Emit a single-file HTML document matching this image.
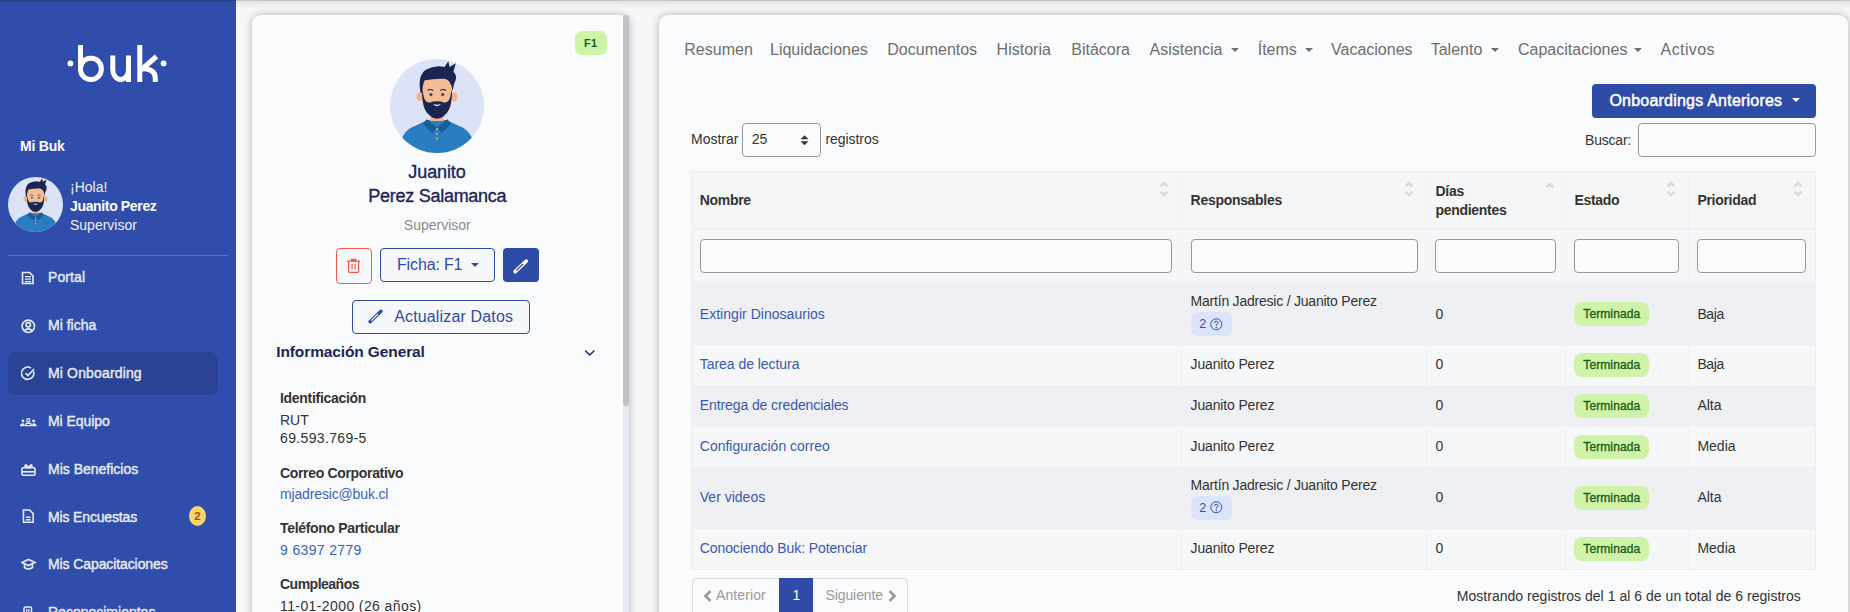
<!DOCTYPE html>
<html><head><meta charset="utf-8"><style>
html,body{margin:0;padding:0;width:1850px;height:612px;overflow:hidden;background:#f6f7f9;font-family:"Liberation Sans",sans-serif}
.a{position:absolute}
.t{position:absolute;white-space:nowrap;line-height:1}
#main{position:absolute;left:236px;top:0;width:1614px;height:612px;overflow:hidden;background:#f4f5f7}
</style></head><body>
<div class="a" style="left:0px;top:0px;width:236px;height:612px;background:#304dab"></div>
<svg width="236" height="120" style="position:absolute;left:0;top:0" fill="none" stroke="#fff" stroke-width="5">
<circle cx="70.4" cy="63.4" r="2.9" fill="#fff" stroke="none"/>
<circle cx="163.6" cy="63.4" r="2.9" fill="#fff" stroke="none"/>
<path d="M80.5 45 V71"/>
<rect x="80.5" y="58.3" width="20.8" height="21.2" rx="10"/>
<path d="M112.8 55.5 V70 A7.85 9.5 0 0 0 128.5 70"/>
<path d="M128.5 55.5 V82"/>
<path d="M139.8 45 V82"/>
<path d="M156.5 56.5 L141 70"/>
<path d="M141 68.5 Q155.3 68.5 155.3 78 V82"/>
</svg>
<div class="t" style="left:20px;top:139.00px;font-size:14px;font-weight:700;color:#fff;letter-spacing:-0.2px;">Mi Buk</div>
<svg viewBox="0 0 100 100" width="55" height="55" style="position:absolute;left:8px;top:177px">
<defs><clipPath id="ca"><circle cx="50" cy="50" r="50"/></clipPath></defs>
<circle cx="50" cy="50" r="50" fill="#dce3f7"/>
<g clip-path="url(#ca)">
<path d="M9 100 Q11 76 27 71 L40 65 L60 65 L73 71 Q89 76 91 100 Z" fill="#2a7dc0"/>
<rect x="43" y="52" width="14" height="14" fill="#f2b48c"/>
<path d="M39 64 L50 73 L45 79 L35 69 Z" fill="#1a5f96"/>
<path d="M61 64 L50 73 L55 79 L65 69 Z" fill="#1a5f96"/>
<circle cx="50" cy="74.5" r="1.1" fill="#e8b84a"/><circle cx="50" cy="79.5" r="1.1" fill="#e8b84a"/><circle cx="50" cy="84.5" r="1.1" fill="#e8b84a"/>
<ellipse cx="32" cy="40" rx="3.8" ry="5" fill="#f2b48c"/>
<ellipse cx="68" cy="40" rx="3.8" ry="5" fill="#f2b48c"/>
<path d="M34.5 24 Q34.5 14 50 14 Q65.5 14 65.5 24 L65.5 46 Q65.5 57 50 57 Q34.5 57 34.5 46 Z" fill="#f5bc93"/>
<path d="M34 32 Q34 52 40 58 Q45 63.5 50 63.5 Q55 63.5 60 58 Q66 52 66 32 L64.5 38 Q63.5 46 58 46.5 Q50 43.5 42 46.5 Q36.5 46 35.5 38 Z" fill="#1a2552"/>
<path d="M45.5 48 Q50 52.5 54.5 48 Q50 49.2 45.5 48 Z" fill="#fff"/>
<path d="M32.5 36 Q29 18 38 11.5 Q48 6 58 8.5 L62 2.5 L63.5 8.5 L70 4.5 L67.5 13.5 Q73 18 68 27 L66.5 34 Q65 22 58 21 Q48 20.5 37 22.5 Q34.5 27 34.5 36 Z" fill="#1a2552"/>
<circle cx="43.5" cy="37.8" r="1.7" fill="#1a5a70"/><circle cx="56" cy="37.8" r="1.7" fill="#1a5a70"/>
<path d="M40 33.5 Q43 31.5 46 33.5" stroke="#1a2552" stroke-width="1.1" fill="none"/>
<path d="M53.5 33.5 Q56.5 31.5 59.5 33.5" stroke="#1a2552" stroke-width="1.1" fill="none"/>
</g></svg>
<div class="t" style="left:70px;top:180.00px;font-size:14px;font-weight:400;color:#eef0f8;">¡Hola!</div>
<div class="t" style="left:70px;top:199.00px;font-size:14px;font-weight:700;color:#fff;letter-spacing:-0.35px;">Juanito Perez</div>
<div class="t" style="left:70px;top:218.00px;font-size:14px;font-weight:400;color:#eef0f8;">Supervisor</div>
<div class="a" style="left:8px;top:255px;width:220px;height:1px;background:rgba(255,255,255,0.22)"></div>
<div class="a" style="left:8px;top:352px;width:210px;height:43px;background:#2a4396;border-radius:8px"></div>
<div class="t" style="left:48px;top:270.00px;font-size:14px;font-weight:400;color:#e8ebf4;letter-spacing:0.1px;-webkit-text-stroke:0.4px #e8ebf4;">Portal</div>
<svg width="14" height="14" style="position:absolute;left:21px;top:270.8px" fill="none" stroke="#e8ebf4" stroke-width="1.6"><path d="M1.5 1.5 H8.5 L12 5 V12.5 H1.5 Z"/><path d="M4 5.6 H10 M4 8.1 H10 M4 10.6 H10" stroke-width="1.3"/></svg>
<div class="t" style="left:48px;top:318.00px;font-size:14px;font-weight:400;color:#e8ebf4;-webkit-text-stroke:0.4px #e8ebf4;">Mi ficha</div>
<svg width="15" height="15" style="position:absolute;left:21px;top:319.4px" fill="none" stroke="#e8ebf4" stroke-width="1.6"><circle cx="7.3" cy="7.3" r="6.2"/><circle cx="7.3" cy="5.8" r="2.2"/><path d="M3.3 11.8 Q7.3 7.8 11.3 11.8"/></svg>
<div class="t" style="left:48px;top:366.00px;font-size:14px;font-weight:400;color:#e8ebf4;letter-spacing:0.15px;-webkit-text-stroke:0.4px #e8ebf4;">Mi Onboarding</div>
<svg width="15" height="15" style="position:absolute;left:21px;top:366px" fill="none" stroke="#e8ebf4" stroke-width="1.6"><path d="M12.5 5.2 A6.2 6.2 0 1 1 10 2"/><path d="M4.5 7 L7 9.5 L13 3"/></svg>
<div class="t" style="left:48px;top:414.00px;font-size:14px;font-weight:400;color:#e8ebf4;letter-spacing:-0.05px;-webkit-text-stroke:0.4px #e8ebf4;">Mi Equipo</div>
<svg width="17" height="10" style="position:absolute;left:19.5px;top:418px" fill="#e8ebf4"><circle cx="8.3" cy="2.2" r="1.6" fill="none" stroke="#e8ebf4" stroke-width="1.2"/><circle cx="3" cy="3" r="1.4"/><circle cx="13.6" cy="3" r="1.4"/><path d="M5.3 7.6 Q5.3 5 8.3 5 Q11.3 5 11.3 7.6 Z" fill="none" stroke="#e8ebf4" stroke-width="1.3"/><path d="M0 8.2 Q0 5.2 3 5.2 Q4.5 5.2 4.5 8.2 Z"/><path d="M12 8.2 Q12 5.2 13.6 5.2 Q16.6 5.2 16.6 8.2 Z"/></svg>
<div class="t" style="left:48px;top:462.00px;font-size:14px;font-weight:400;color:#e8ebf4;-webkit-text-stroke:0.4px #e8ebf4;">Mis Beneficios</div>
<svg width="15" height="13" style="position:absolute;left:20.5px;top:462.8px" fill="none" stroke="#e8ebf4" stroke-width="1.6"><rect x="1" y="4.8" width="13" height="7.4" rx="1.2"/><path d="M1 8.8 H14"/><path d="M7.5 4.8 Q5 0.5 4 2.5 Q3.5 4 7.5 4.8 Q10 0.5 11 2.5 Q11.5 4 7.5 4.8"/></svg>
<div class="t" style="left:48px;top:510.00px;font-size:14px;font-weight:400;color:#e8ebf4;letter-spacing:-0.15px;-webkit-text-stroke:0.4px #e8ebf4;">Mis Encuestas</div>
<svg width="13" height="15" style="position:absolute;left:22px;top:508.5px" fill="none" stroke="#e8ebf4" stroke-width="1.6"><path d="M1.5 1 H7.5 L11.2 4.7 V13.2 H1.5 Z"/><path d="M4 8.3 H8.5 M4 10.8 H8.5"/></svg>
<div class="t" style="left:48px;top:557.00px;font-size:14px;font-weight:400;color:#e8ebf4;letter-spacing:-0.1px;-webkit-text-stroke:0.4px #e8ebf4;">Mis Capacitaciones</div>
<svg width="16" height="13" style="position:absolute;left:20.5px;top:558px" fill="none" stroke="#e8ebf4" stroke-width="1.6"><path d="M1 4.5 L7.5 1.5 L14 4.5 L7.5 7.5 Z"/><path d="M3.5 6 V9.5 Q7.5 12.5 11.5 9.5 V6"/></svg>
<div class="t" style="left:48px;top:605.00px;font-size:14px;font-weight:400;color:#e8ebf4;-webkit-text-stroke:0.4px #e8ebf4;">Reconocimientos</div>
<svg width="11" height="12" style="position:absolute;left:23px;top:605.5px" fill="none" stroke="#e8ebf4" stroke-width="1.5"><rect x="1" y="1" width="7.5" height="10" rx="1.5"/><path d="M3.7 3 V7 M5.8 3 V7" stroke-width="1.2"/></svg>
<div class="a" style="left:189px;top:506px;width:17px;height:20px;background:#f8d46a;border-radius:50%"></div>
<div class="t" style="left:194.3px;top:511.00px;font-size:11.5px;font-weight:700;color:#a0500f;">2</div>
<div class="a" style="left:252px;top:15px;width:377px;height:640px;background:#fafbfd;border-radius:9px;box-shadow:0 0 8px rgba(0,0,0,0.28)"></div>
<div class="a" style="left:623px;top:15px;width:6px;height:597px;background:#e6e9f2;border-radius:0 9px 0 0"></div>
<div class="a" style="left:623px;top:15px;width:6px;height:391px;background:#c2c3c6;border-radius:3px"></div>
<div class="a" style="left:575px;top:31px;width:32px;height:24px;background:#cdf4a9;border-radius:7px"></div>
<div class="t" style="left:584px;top:38.00px;font-size:11px;font-weight:700;color:#1a5e1a;letter-spacing:0.2px;">F1</div>
<svg viewBox="0 0 100 100" width="94" height="94" style="position:absolute;left:390px;top:58.5px">
<defs><clipPath id="cb"><circle cx="50" cy="50" r="50"/></clipPath></defs>
<circle cx="50" cy="50" r="50" fill="#dce3f7"/>
<g clip-path="url(#cb)">
<path d="M9 100 Q11 76 27 71 L40 65 L60 65 L73 71 Q89 76 91 100 Z" fill="#2a7dc0"/>
<rect x="43" y="52" width="14" height="14" fill="#f2b48c"/>
<path d="M39 64 L50 73 L45 79 L35 69 Z" fill="#1a5f96"/>
<path d="M61 64 L50 73 L55 79 L65 69 Z" fill="#1a5f96"/>
<circle cx="50" cy="74.5" r="1.1" fill="#e8b84a"/><circle cx="50" cy="79.5" r="1.1" fill="#e8b84a"/><circle cx="50" cy="84.5" r="1.1" fill="#e8b84a"/>
<ellipse cx="32" cy="40" rx="3.8" ry="5" fill="#f2b48c"/>
<ellipse cx="68" cy="40" rx="3.8" ry="5" fill="#f2b48c"/>
<path d="M34.5 24 Q34.5 14 50 14 Q65.5 14 65.5 24 L65.5 46 Q65.5 57 50 57 Q34.5 57 34.5 46 Z" fill="#f5bc93"/>
<path d="M34 32 Q34 52 40 58 Q45 63.5 50 63.5 Q55 63.5 60 58 Q66 52 66 32 L64.5 38 Q63.5 46 58 46.5 Q50 43.5 42 46.5 Q36.5 46 35.5 38 Z" fill="#1a2552"/>
<path d="M45.5 48 Q50 52.5 54.5 48 Q50 49.2 45.5 48 Z" fill="#fff"/>
<path d="M32.5 36 Q29 18 38 11.5 Q48 6 58 8.5 L62 2.5 L63.5 8.5 L70 4.5 L67.5 13.5 Q73 18 68 27 L66.5 34 Q65 22 58 21 Q48 20.5 37 22.5 Q34.5 27 34.5 36 Z" fill="#1a2552"/>
<circle cx="43.5" cy="37.8" r="1.7" fill="#1a5a70"/><circle cx="56" cy="37.8" r="1.7" fill="#1a5a70"/>
<path d="M40 33.5 Q43 31.5 46 33.5" stroke="#1a2552" stroke-width="1.1" fill="none"/>
<path d="M53.5 33.5 Q56.5 31.5 59.5 33.5" stroke="#1a2552" stroke-width="1.1" fill="none"/>
</g></svg>
<div class="t" style="left:237.0px;width:400px;text-align:center;top:163.00px;font-size:18px;font-weight:400;color:#1b2559;letter-spacing:-0.1px;-webkit-text-stroke:0.35px #1b2559;">Juanito</div>
<div class="t" style="left:237.3px;width:400px;text-align:center;top:187.00px;font-size:18px;font-weight:400;color:#1b2559;letter-spacing:-0.27px;-webkit-text-stroke:0.35px #1b2559;">Perez Salamanca</div>
<div class="t" style="left:237.3px;width:400px;text-align:center;top:218.00px;font-size:14px;font-weight:400;color:#8a8a8a;">Supervisor</div>
<div class="a" style="left:336px;top:248px;width:35.8px;height:35.8px;box-sizing:border-box;border:1px solid #f4584c;border-radius:4px;background:#f7f8fa"></div>
<svg width="16" height="16" style="position:absolute;left:346px;top:258px" fill="none" stroke="#f4584c" stroke-width="1.3"><path d="M1 3.2 H14.2"/><path d="M5.3 3 V1.5 H9.9 V3" fill="#f4584c"/><path d="M2.6 3.5 V13.6 Q2.6 14.4 3.4 14.4 H11.8 Q12.6 14.4 12.6 13.6 V3.5"/><path d="M6.1 5.8 V11.6 M9.1 5.8 V11.6" stroke-width="1.5" stroke-opacity="0.8"/></svg>
<div class="a" style="left:380px;top:248px;width:114.6px;height:33.6px;box-sizing:border-box;border:1px solid #2f4ba8;border-radius:4px;background:#f7f8fa"></div>
<div class="t" style="left:397px;top:257.00px;font-size:16px;font-weight:400;color:#2f4ba8;letter-spacing:-0.15px;">Ficha: F1</div>
<div class="a" style="left:470.5px;top:262.5px;width:0px;height:0px;border-left:4px solid transparent;border-right:4px solid transparent;border-top:4px solid #2f4ba8"></div>
<div class="a" style="left:503.3px;top:248px;width:35.6px;height:33.6px;background:#2f4ba8;border-radius:4px"></div>
<svg width="18" height="16" style="position:absolute;left:512px;top:258.5px" fill="none"><path d="M3.2 12.6 L14.2 2.1" stroke="#fff" stroke-width="3.6" stroke-linecap="round"/><path d="M2.2 14.4 L1.8 12.4 L4.4 13.8 Z" fill="#fff"/><path d="M4.3 11.5 L11.2 5" stroke="#2f4ba8" stroke-width="1.2" stroke-linecap="butt"/></svg>
<div class="a" style="left:352.4px;top:300.2px;width:177.3px;height:33.5px;box-sizing:border-box;border:1px solid #2f4ba8;border-radius:4px;background:#f7f8fa"></div>
<svg width="18" height="16" style="position:absolute;left:366.5px;top:309px" fill="none"><path d="M3.2 12.6 L14 2.3" stroke="#2f4ba8" stroke-width="3.4" stroke-linecap="round"/><path d="M2.2 14.4 L1.8 12.4 L4.4 13.8 Z" fill="#2f4ba8"/><path d="M4.2 11.6 L10.8 5.3" stroke="#f7f8fa" stroke-width="1.2" stroke-linecap="butt"/></svg>
<div class="t" style="left:394.2px;top:309.00px;font-size:16px;font-weight:400;color:#2f4ba8;letter-spacing:0.15px;">Actualizar Datos</div>
<div class="t" style="left:276.3px;top:344.00px;font-size:15.5px;font-weight:700;color:#1b2559;letter-spacing:-0.12px;">Información General</div>
<svg width="12" height="8" style="position:absolute;left:583.5px;top:348.5px" fill="none" stroke="#1b2559" stroke-width="1.4"><path d="M1.2 1.5 L5.8 6 L10.4 1.5"/></svg>
<div class="t" style="left:280px;top:391.00px;font-size:14px;font-weight:700;color:#333;letter-spacing:-0.3px;">Identificación</div>
<div class="t" style="left:280px;top:413.00px;font-size:14px;font-weight:400;color:#333;">RUT</div>
<div class="t" style="left:280px;top:431.00px;font-size:14px;font-weight:400;color:#333;letter-spacing:0.35px;">69.593.769-5</div>
<div class="t" style="left:280px;top:466.00px;font-size:14px;font-weight:700;color:#333;letter-spacing:-0.33px;">Correo Corporativo</div>
<div class="t" style="left:280px;top:487.00px;font-size:14px;font-weight:400;color:#3f5fbf;letter-spacing:-0.15px;">mjadresic@buk.cl</div>
<div class="t" style="left:280px;top:521.00px;font-size:14px;font-weight:700;color:#333;letter-spacing:-0.33px;">Teléfono Particular</div>
<div class="t" style="left:280px;top:543.00px;font-size:14px;font-weight:400;color:#3f5fbf;letter-spacing:0.35px;">9 6397 2779</div>
<div class="t" style="left:280px;top:577.00px;font-size:14px;font-weight:700;color:#333;letter-spacing:-0.5px;">Cumpleaños</div>
<div class="t" style="left:280px;top:599.00px;font-size:14px;font-weight:400;color:#333;letter-spacing:0.4px;">11-01-2000 (26 años)</div>
<div class="a" style="left:659px;top:15px;width:1189px;height:640px;background:#fafbfd;border-radius:9px;box-shadow:0 0 8px rgba(0,0,0,0.28)"></div>
<div class="t" style="left:684.3px;top:42.00px;font-size:16px;font-weight:400;color:#6e6e6e;">Resumen</div>
<div class="t" style="left:770px;top:42.00px;font-size:16px;font-weight:400;color:#6e6e6e;">Liquidaciones</div>
<div class="t" style="left:887.3px;top:42.00px;font-size:16px;font-weight:400;color:#6e6e6e;">Documentos</div>
<div class="t" style="left:996.6px;top:42.00px;font-size:16px;font-weight:400;color:#6e6e6e;">Historia</div>
<div class="t" style="left:1071.3px;top:42.00px;font-size:16px;font-weight:400;color:#6e6e6e;">Bitácora</div>
<div class="t" style="left:1149.5px;top:42.00px;font-size:16px;font-weight:400;color:#6e6e6e;">Asistencia</div>
<div class="a" style="left:1231.2px;top:47.5px;width:0px;height:0px;border-left:4.0px solid transparent;border-right:4.0px solid transparent;border-top:4px solid #6e6e6e"></div>
<div class="t" style="left:1257.7px;top:42.00px;font-size:16px;font-weight:400;color:#6e6e6e;">Ítems</div>
<div class="a" style="left:1305px;top:47.5px;width:0px;height:0px;border-left:4.0px solid transparent;border-right:4.0px solid transparent;border-top:4px solid #6e6e6e"></div>
<div class="t" style="left:1331px;top:42.00px;font-size:16px;font-weight:400;color:#6e6e6e;">Vacaciones</div>
<div class="t" style="left:1430.7px;top:42.00px;font-size:16px;font-weight:400;color:#6e6e6e;">Talento</div>
<div class="a" style="left:1491px;top:47.5px;width:0px;height:0px;border-left:4.0px solid transparent;border-right:4.0px solid transparent;border-top:4px solid #6e6e6e"></div>
<div class="t" style="left:1518px;top:42.00px;font-size:16px;font-weight:400;color:#6e6e6e;">Capacitaciones</div>
<div class="a" style="left:1634.4px;top:47.5px;width:0px;height:0px;border-left:4.0px solid transparent;border-right:4.0px solid transparent;border-top:4px solid #6e6e6e"></div>
<div class="t" style="left:1660.6px;top:42.00px;font-size:16px;font-weight:400;color:#6e6e6e;letter-spacing:0.4px;">Activos</div>
<div class="a" style="left:1592px;top:84px;width:223.8px;height:33.6px;background:#2f4ba8;border-radius:4px"></div>
<div class="t" style="left:1609.4px;top:93.00px;font-size:16px;font-weight:400;color:#fff;letter-spacing:0.22px;-webkit-text-stroke:0.5px #fff;">Onboardings Anteriores</div>
<div class="a" style="left:1791.5px;top:98.2px;width:0px;height:0px;border-left:4.0px solid transparent;border-right:4.0px solid transparent;border-top:4.5px solid #fff"></div>
<div class="t" style="left:691px;top:132.00px;font-size:14px;font-weight:400;color:#333;">Mostrar</div>
<div class="a" style="left:742px;top:123px;width:79px;height:34px;box-sizing:border-box;border:1px solid #98999c;border-radius:4px;background:#fafbfd"></div>
<div class="t" style="left:751.8px;top:132.00px;font-size:14px;font-weight:400;color:#333;">25</div>
<svg width="9" height="11" style="position:absolute;left:799.5px;top:134.5px" fill="#333"><path d="M0.5 4.3 L4.5 0.3 L8.5 4.3 Z M0.5 6.2 L4.5 10.2 L8.5 6.2 Z"/></svg>
<div class="t" style="left:825.4px;top:132.00px;font-size:14px;font-weight:400;color:#333;letter-spacing:-0.05px;">registros</div>
<div class="t" style="left:1585px;top:133.00px;font-size:14px;font-weight:400;color:#333;letter-spacing:-0.2px;">Buscar:</div>
<div class="a" style="left:1638px;top:123px;width:178px;height:34px;box-sizing:border-box;border:1px solid #98999c;border-radius:4px;background:#fafbfd"></div>
<div class="a" style="left:691px;top:171px;width:1124.6px;height:399px;background:#eceef1"></div>
<div class="a" style="left:692px;top:172px;width:1122.6px;height:56px;background:#f5f6f8"></div>
<div class="a" style="left:691px;top:228px;width:1124.6px;height:2px;background:#eff0f3"></div>
<div class="a" style="left:692px;top:230px;width:1122.6px;height:51px;background:#f5f6f8"></div>
<div class="a" style="left:692px;top:281px;width:1122.6px;height:64px;background:#eff0f3"></div>
<div class="a" style="left:692px;top:345px;width:1122.6px;height:40px;background:#f6f7f9"></div>
<div class="a" style="left:692px;top:385px;width:1122.6px;height:42px;background:#eff0f3"></div>
<div class="a" style="left:692px;top:427px;width:1122.6px;height:40px;background:#f6f7f9"></div>
<div class="a" style="left:692px;top:467px;width:1122.6px;height:62px;background:#eff0f3"></div>
<div class="a" style="left:692px;top:529px;width:1122.6px;height:40px;background:#f6f7f9"></div>
<div class="a" style="left:1181px;top:172px;width:1px;height:397px;background:#eff0f3"></div>
<div class="a" style="left:1426px;top:172px;width:1px;height:397px;background:#eff0f3"></div>
<div class="a" style="left:1565px;top:172px;width:1px;height:397px;background:#eff0f3"></div>
<div class="a" style="left:1688px;top:172px;width:1px;height:397px;background:#eff0f3"></div>
<div class="t" style="left:699.7px;top:193.00px;font-size:14px;font-weight:700;color:#333;letter-spacing:-0.3px;">Nombre</div>
<div class="t" style="left:1190.6px;top:193.00px;font-size:14px;font-weight:700;color:#333;letter-spacing:-0.3px;">Responsables</div>
<div class="t" style="left:1435.5px;top:184.00px;font-size:14px;font-weight:700;color:#333;letter-spacing:-0.3px;">Días</div>
<div class="t" style="left:1435.5px;top:203.00px;font-size:14px;font-weight:700;color:#333;letter-spacing:-0.3px;">pendientes</div>
<div class="t" style="left:1574.4px;top:193.00px;font-size:14px;font-weight:700;color:#333;letter-spacing:-0.3px;">Estado</div>
<div class="t" style="left:1697.4px;top:193.00px;font-size:14px;font-weight:700;color:#333;letter-spacing:-0.3px;">Prioridad</div>
<svg width="10" height="16" style="position:absolute;left:1158.5px;top:180.5px" fill="none" stroke="#d9dadc" stroke-width="2.5"><path d="M1.5 5.3 L5 2 L8.5 5.3"/><path d="M1.5 10.7 L5 14 L8.5 10.7"/></svg>
<svg width="10" height="16" style="position:absolute;left:1404px;top:180.5px" fill="none" stroke="#d9dadc" stroke-width="2.5"><path d="M1.5 5.3 L5 2 L8.5 5.3"/><path d="M1.5 10.7 L5 14 L8.5 10.7"/></svg>
<svg width="10" height="16" style="position:absolute;left:1544.5px;top:181.5px" fill="none" stroke="#d9dadc" stroke-width="2.5"><path d="M1.5 5.3 L5 2 L8.5 5.3"/></svg>
<svg width="10" height="16" style="position:absolute;left:1665.8px;top:180.5px" fill="none" stroke="#d9dadc" stroke-width="2.5"><path d="M1.5 5.3 L5 2 L8.5 5.3"/><path d="M1.5 10.7 L5 14 L8.5 10.7"/></svg>
<svg width="10" height="16" style="position:absolute;left:1793px;top:180.5px" fill="none" stroke="#d9dadc" stroke-width="2.5"><path d="M1.5 5.3 L5 2 L8.5 5.3"/><path d="M1.5 10.7 L5 14 L8.5 10.7"/></svg>
<div class="a" style="left:700px;top:239px;width:472px;height:34px;box-sizing:border-box;border:1px solid #98999c;border-radius:4px;background:#fafbfd"></div>
<div class="a" style="left:1191px;top:239px;width:227px;height:34px;box-sizing:border-box;border:1px solid #98999c;border-radius:4px;background:#fafbfd"></div>
<div class="a" style="left:1435px;top:239px;width:121px;height:34px;box-sizing:border-box;border:1px solid #98999c;border-radius:4px;background:#fafbfd"></div>
<div class="a" style="left:1574px;top:239px;width:105px;height:34px;box-sizing:border-box;border:1px solid #98999c;border-radius:4px;background:#fafbfd"></div>
<div class="a" style="left:1697px;top:239px;width:109px;height:34px;box-sizing:border-box;border:1px solid #98999c;border-radius:4px;background:#fafbfd"></div>
<div class="t" style="left:699.8px;top:307.00px;font-size:14px;font-weight:400;color:#3b57b5;letter-spacing:0.03px;">Extingir Dinosaurios</div>
<div class="t" style="left:1190.6px;top:294.00px;font-size:14px;font-weight:400;color:#333;letter-spacing:-0.22px;">Martín Jadresic / Juanito Perez</div>
<div class="a" style="left:1190.6px;top:312.2px;width:41.2px;height:24px;background:#dce4fb;border-radius:7px"></div>
<div class="t" style="left:1199.3px;top:318.00px;font-size:12.5px;font-weight:400;color:#3551b0;">2</div>
<svg width="13" height="13" style="position:absolute;left:1210px;top:317.5px" fill="none" stroke="#3551b0" stroke-width="1"><circle cx="6.3" cy="6.3" r="5.5"/><path d="M4.5 5 Q4.5 3.2 6.3 3.2 Q8.1 3.2 8.1 4.8 Q8.1 6 6.3 6.6 V7.8"/><circle cx="6.3" cy="9.6" r="0.4" fill="#3551b0"/></svg>
<div class="t" style="left:1435.6px;top:307.00px;font-size:14px;font-weight:400;color:#333;">0</div>
<div class="a" style="left:1574.4px;top:302.0px;width:74.4px;height:24px;background:#cff4a9;border-radius:8px"></div>
<div class="t" style="left:1583.3px;top:308.00px;font-size:12px;font-weight:400;color:#1d5e1a;letter-spacing:0.1px;-webkit-text-stroke:0.35px #1d5e1a;">Terminada</div>
<div class="t" style="left:1697.4px;top:307.00px;font-size:14px;font-weight:400;color:#333;letter-spacing:-0.4px;">Baja</div>
<div class="t" style="left:699.8px;top:357.00px;font-size:14px;font-weight:400;color:#3b57b5;letter-spacing:-0.05px;">Tarea de lectura</div>
<div class="t" style="left:1190.6px;top:357.00px;font-size:14px;font-weight:400;color:#333;letter-spacing:-0.15px;">Juanito Perez</div>
<div class="t" style="left:1435.6px;top:357.00px;font-size:14px;font-weight:400;color:#333;">0</div>
<div class="a" style="left:1574.4px;top:352.7px;width:74.4px;height:24px;background:#cff4a9;border-radius:8px"></div>
<div class="t" style="left:1583.3px;top:359.00px;font-size:12px;font-weight:400;color:#1d5e1a;letter-spacing:0.1px;-webkit-text-stroke:0.35px #1d5e1a;">Terminada</div>
<div class="t" style="left:1697.4px;top:357.00px;font-size:14px;font-weight:400;color:#333;letter-spacing:-0.4px;">Baja</div>
<div class="t" style="left:699.8px;top:398.00px;font-size:14px;font-weight:400;color:#3b57b5;letter-spacing:-0.1px;">Entrega de credenciales</div>
<div class="t" style="left:1190.6px;top:398.00px;font-size:14px;font-weight:400;color:#333;letter-spacing:-0.15px;">Juanito Perez</div>
<div class="t" style="left:1435.6px;top:398.00px;font-size:14px;font-weight:400;color:#333;">0</div>
<div class="a" style="left:1574.4px;top:393.7px;width:74.4px;height:24px;background:#cff4a9;border-radius:8px"></div>
<div class="t" style="left:1583.3px;top:400.00px;font-size:12px;font-weight:400;color:#1d5e1a;letter-spacing:0.1px;-webkit-text-stroke:0.35px #1d5e1a;">Terminada</div>
<div class="t" style="left:1697.4px;top:398.00px;font-size:14px;font-weight:400;color:#333;">Alta</div>
<div class="t" style="left:699.8px;top:439.00px;font-size:14px;font-weight:400;color:#3b57b5;">Configuración correo</div>
<div class="t" style="left:1190.6px;top:439.00px;font-size:14px;font-weight:400;color:#333;letter-spacing:-0.15px;">Juanito Perez</div>
<div class="t" style="left:1435.6px;top:439.00px;font-size:14px;font-weight:400;color:#333;">0</div>
<div class="a" style="left:1574.4px;top:434.5px;width:74.4px;height:24px;background:#cff4a9;border-radius:8px"></div>
<div class="t" style="left:1583.3px;top:441.00px;font-size:12px;font-weight:400;color:#1d5e1a;letter-spacing:0.1px;-webkit-text-stroke:0.35px #1d5e1a;">Terminada</div>
<div class="t" style="left:1697.4px;top:439.00px;font-size:14px;font-weight:400;color:#333;">Media</div>
<div class="t" style="left:699.8px;top:490.00px;font-size:14px;font-weight:400;color:#3b57b5;">Ver videos</div>
<div class="t" style="left:1190.6px;top:478.00px;font-size:14px;font-weight:400;color:#333;letter-spacing:-0.22px;">Martín Jadresic / Juanito Perez</div>
<div class="a" style="left:1190.6px;top:495.7px;width:41.2px;height:24px;background:#dce4fb;border-radius:7px"></div>
<div class="t" style="left:1199.3px;top:502.00px;font-size:12.5px;font-weight:400;color:#3551b0;">2</div>
<svg width="13" height="13" style="position:absolute;left:1210px;top:501.0px" fill="none" stroke="#3551b0" stroke-width="1"><circle cx="6.3" cy="6.3" r="5.5"/><path d="M4.5 5 Q4.5 3.2 6.3 3.2 Q8.1 3.2 8.1 4.8 Q8.1 6 6.3 6.6 V7.8"/><circle cx="6.3" cy="9.6" r="0.4" fill="#3551b0"/></svg>
<div class="t" style="left:1435.6px;top:490.00px;font-size:14px;font-weight:400;color:#333;">0</div>
<div class="a" style="left:1574.4px;top:485.5px;width:74.4px;height:24px;background:#cff4a9;border-radius:8px"></div>
<div class="t" style="left:1583.3px;top:492.00px;font-size:12px;font-weight:400;color:#1d5e1a;letter-spacing:0.1px;-webkit-text-stroke:0.35px #1d5e1a;">Terminada</div>
<div class="t" style="left:1697.4px;top:490.00px;font-size:14px;font-weight:400;color:#333;">Alta</div>
<div class="t" style="left:699.8px;top:541.00px;font-size:14px;font-weight:400;color:#3b57b5;letter-spacing:-0.1px;">Conociendo Buk: Potenciar</div>
<div class="t" style="left:1190.6px;top:541.00px;font-size:14px;font-weight:400;color:#333;letter-spacing:-0.15px;">Juanito Perez</div>
<div class="t" style="left:1435.6px;top:541.00px;font-size:14px;font-weight:400;color:#333;">0</div>
<div class="a" style="left:1574.4px;top:536.5px;width:74.4px;height:24px;background:#cff4a9;border-radius:8px"></div>
<div class="t" style="left:1583.3px;top:543.00px;font-size:12px;font-weight:400;color:#1d5e1a;letter-spacing:0.1px;-webkit-text-stroke:0.35px #1d5e1a;">Terminada</div>
<div class="t" style="left:1697.4px;top:541.00px;font-size:14px;font-weight:400;color:#333;">Media</div>
<div class="a" style="left:691.6px;top:578.3px;width:216.8px;height:50px;box-sizing:border-box;border:1px solid #dcdde0;border-radius:4px;background:#fafbfd"></div>
<div class="a" style="left:779.2px;top:578.3px;width:33.7px;height:40px;background:#2f4ba8"></div>
<div class="t" style="left:792.5px;top:588.00px;font-size:14px;font-weight:400;color:#fff;">1</div>
<svg width="10" height="12" style="position:absolute;left:703px;top:589.5px" fill="none" stroke="#9a9a9a" stroke-width="2.6"><path d="M7.5 1 L2.5 6 L7.5 11"/></svg>
<div class="t" style="left:716px;top:588.00px;font-size:14px;font-weight:400;color:#9a9a9a;letter-spacing:0.1px;">Anterior</div>
<div class="t" style="left:825.5px;top:588.00px;font-size:14px;font-weight:400;color:#9a9a9a;letter-spacing:-0.1px;">Siguiente</div>
<svg width="10" height="12" style="position:absolute;left:887px;top:589.5px" fill="none" stroke="#9a9a9a" stroke-width="2.6"><path d="M2.5 1 L7.5 6 L2.5 11"/></svg>
<div class="t" style="left:1200.9px;width:600px;text-align:right;top:589.00px;font-size:14px;font-weight:400;color:#333;letter-spacing:0.03px;">Mostrando registros del 1 al 6 de un total de 6 registros</div>
<div class="a" style="left:236px;top:0px;width:1614px;height:10px;background:linear-gradient(rgba(0,0,0,0.2) 0px,rgba(0,0,0,0.2) 1px,rgba(0,0,0,0.08) 1px,rgba(0,0,0,0.06) 3px,rgba(0,0,0,0) 9px)"></div>
<div class="a" style="left:0px;top:0px;width:236px;height:3px;background:linear-gradient(rgba(0,0,0,0.2) 0px,rgba(0,0,0,0.2) 1px,rgba(0,0,0,0.08) 1px,rgba(0,0,0,0) 3px)"></div>

</body></html>
